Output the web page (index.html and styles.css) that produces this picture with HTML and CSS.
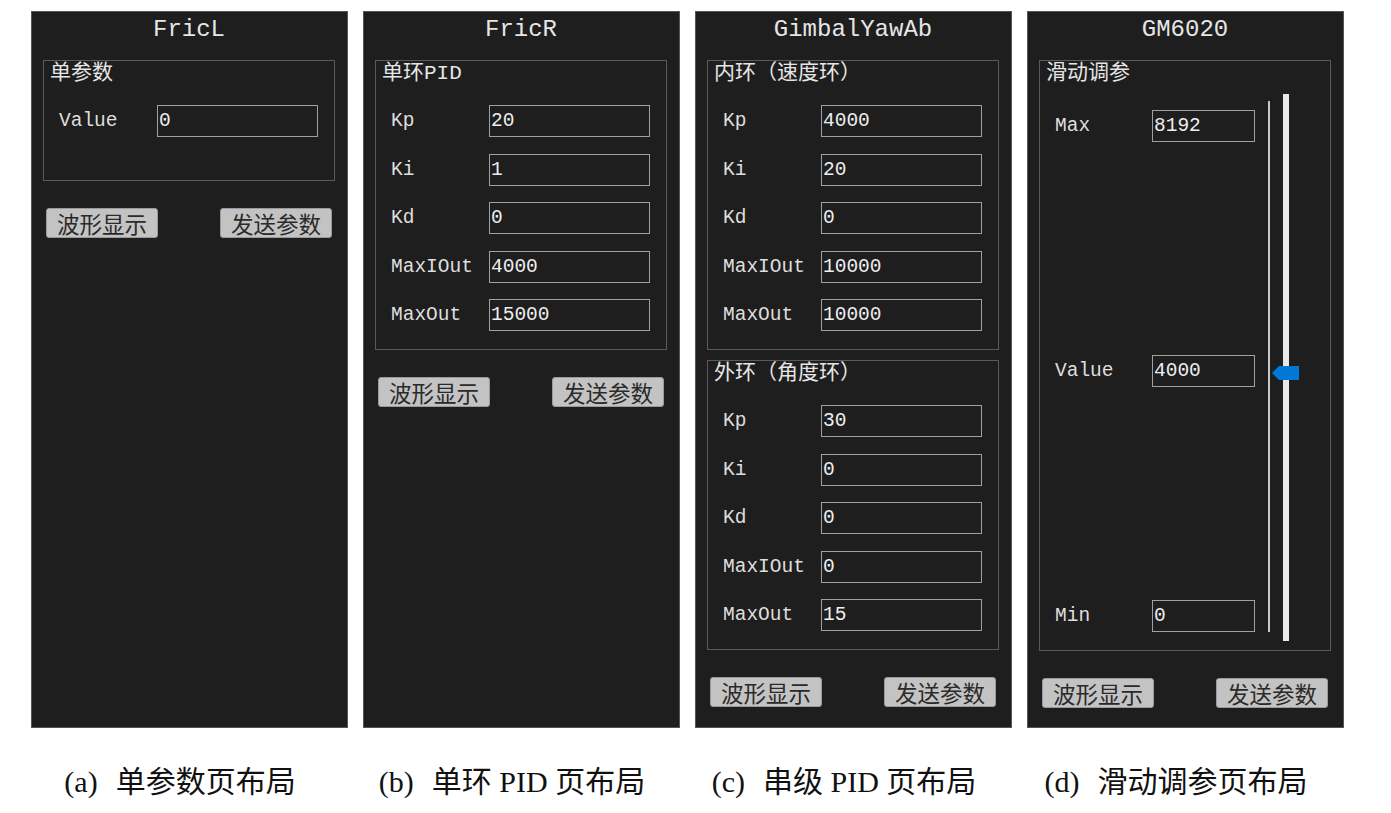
FILE: index.html
```html
<!DOCTYPE html>
<html lang="zh">
<head>
<meta charset="utf-8">
<title>Layouts</title>
<link rel="stylesheet" href="styles.css">
</head>
<body>
<div class="figure">
  <div class="panels">
    <section class="panel">
      <div class="title">FricL</div>
      <div class="group group-single">
        <div class="group-title">单参数</div>
        <div class="rows">
          <div class="row"><span class="label">Value</span><span class="input">0</span></div>
        </div>
      </div>
      <div class="buttons"><button class="btn">波形显示</button><button class="btn">发送参数</button></div>
    </section>

    <section class="panel">
      <div class="title">FricR</div>
      <div class="group">
        <div class="group-title">单环PID</div>
        <div class="rows">
          <div class="row"><span class="label">Kp</span><span class="input">20</span></div>
          <div class="row"><span class="label">Ki</span><span class="input">1</span></div>
          <div class="row"><span class="label">Kd</span><span class="input">0</span></div>
          <div class="row"><span class="label">MaxIOut</span><span class="input">4000</span></div>
          <div class="row"><span class="label">MaxOut</span><span class="input">15000</span></div>
        </div>
      </div>
      <div class="buttons"><button class="btn">波形显示</button><button class="btn">发送参数</button></div>
    </section>

    <section class="panel">
      <div class="title">GimbalYawAb</div>
      <div class="group">
        <div class="group-title">内环（速度环）</div>
        <div class="rows">
          <div class="row"><span class="label">Kp</span><span class="input">4000</span></div>
          <div class="row"><span class="label">Ki</span><span class="input">20</span></div>
          <div class="row"><span class="label">Kd</span><span class="input">0</span></div>
          <div class="row"><span class="label">MaxIOut</span><span class="input">10000</span></div>
          <div class="row"><span class="label">MaxOut</span><span class="input">10000</span></div>
        </div>
      </div>
      <div class="group group-second">
        <div class="group-title">外环（角度环）</div>
        <div class="rows">
          <div class="row"><span class="label">Kp</span><span class="input">30</span></div>
          <div class="row"><span class="label">Ki</span><span class="input">0</span></div>
          <div class="row"><span class="label">Kd</span><span class="input">0</span></div>
          <div class="row"><span class="label">MaxIOut</span><span class="input">0</span></div>
          <div class="row"><span class="label">MaxOut</span><span class="input">15</span></div>
        </div>
      </div>
      <div class="buttons"><button class="btn">波形显示</button><button class="btn">发送参数</button></div>
    </section>

    <section class="panel">
      <div class="title">GM6020</div>
      <div class="group group-slider">
        <div class="group-title">滑动调参</div>
        <div class="slider-body">
          <div class="slider-rows">
            <div class="row"><span class="label label-short">Max</span><span class="input input-short">8192</span></div>
            <div class="row"><span class="label label-short">Value</span><span class="input input-short">4000</span></div>
            <div class="row"><span class="label label-short">Min</span><span class="input input-short">0</span></div>
          </div>
          <div class="ticks"></div>
          <div class="track"><div class="thumb"></div></div>
        </div>
      </div>
      <div class="buttons"><button class="btn">波形显示</button><button class="btn">发送参数</button></div>
    </section>
  </div>

  <div class="captions">
    <div class="caption"><span class="cap-tag">(a)</span>单参数页布局</div>
    <div class="caption"><span class="cap-tag">(b)</span>单环 PID 页布局</div>
    <div class="caption"><span class="cap-tag">(c)</span>串级 PID 页布局</div>
    <div class="caption"><span class="cap-tag">(d)</span>滑动调参页布局</div>
  </div>
</div>
</body>
</html>
```

FILE: styles.css
```css
html, body {
  margin: 0;
  padding: 0;
  background: #ffffff;
}

.figure {
  padding: 11px 0 0 31px;
}

.panels {
  display: flex;
  gap: 15px;
}

.panel {
  box-sizing: border-box;
  width: 317px;
  height: 717px;
  background: #1e1e1e;
  border: 1px solid #555555;
  padding: 0 12px 0 11px;
  display: flex;
  flex-direction: column;
  font-family: "Liberation Mono", "Noto Sans CJK SC", monospace;
  color: #e2e2e2;
}

.title {
  height: 36px;
  line-height: 36px;
  padding-bottom: 12px;
  text-align: center;
  font-size: 24px;
  color: #e6e6e6;
}

.group {
  box-sizing: border-box;
  border: 1px solid #5a5a5a;
  padding: 0 0 18px 15px;
}

.group-single {
  height: 121px;
}

.group-second {
  margin-top: 10px;
}

.group-title {
  margin-left: -9px;
  height: 26px;
  line-height: 26px;
  font-size: 21px;
  color: #e6e6e6;
  margin-bottom: 18px;
}

.rows {
  display: flex;
  flex-direction: column;
  gap: 16.5px;
}

.row {
  display: flex;
  align-items: center;
}

.label {
  width: 98px;
  font-size: 19.5px;
  color: #dedede;
}

.input {
  box-sizing: border-box;
  width: 161px;
  height: 32px;
  line-height: 30px;
  border: 1px solid #a0a0a0;
  padding-left: 1px;
  font-size: 19.5px;
  color: #eeeeee;
}

.label-short {
  width: 97px;
}

.input-short {
  width: 103px;
}

.group-slider {
  height: 591px;
  padding-bottom: 0;
  display: flex;
  flex-direction: column;
}

.group-slider .group-title {
  margin-bottom: 0;
}

.slider-body {
  flex: 1;
  display: flex;
}

.slider-rows {
  display: flex;
  flex-direction: column;
  justify-content: space-between;
  padding: 23px 0 18px;
}

.ticks {
  width: 2px;
  margin: 14px 0 18px 13px;
  background: #c8c8c8;
}

.track {
  position: relative;
  width: 6px;
  margin: 7px 0 9px 13px;
  background: #e8e8e8;
}

.thumb {
  position: absolute;
  top: 272px;
  left: -11px;
  width: 27px;
  height: 14px;
  background: #0078d7;
  clip-path: polygon(0 50%, 7px 0, 100% 0, 100% 100%, 7px 100%);
}

.buttons {
  display: flex;
  justify-content: space-between;
  padding: 0 3px;
  margin-top: 27px;
}

.btn {
  box-sizing: border-box;
  width: 112px;
  height: 30px;
  padding: 0;
  background: #c3c3c3;
  border: 1px solid #9a9a9a;
  border-radius: 3px;
  font-family: "Noto Sans CJK SC", sans-serif;
  font-size: 22.5px;
  line-height: 26px;
  color: #2a2a2a;
}

.captions {
  display: flex;
  gap: 15px;
  margin-top: 34px;
}

.caption {
  width: 317px;
  box-sizing: border-box;
  padding-right: 19px;
  text-align: center;
  font-family: "Liberation Serif", "Noto Sans CJK SC", serif;
  font-size: 30px;
  line-height: 40px;
  color: #111111;
}

.cap-tag {
  margin-right: 18px;
}
```
